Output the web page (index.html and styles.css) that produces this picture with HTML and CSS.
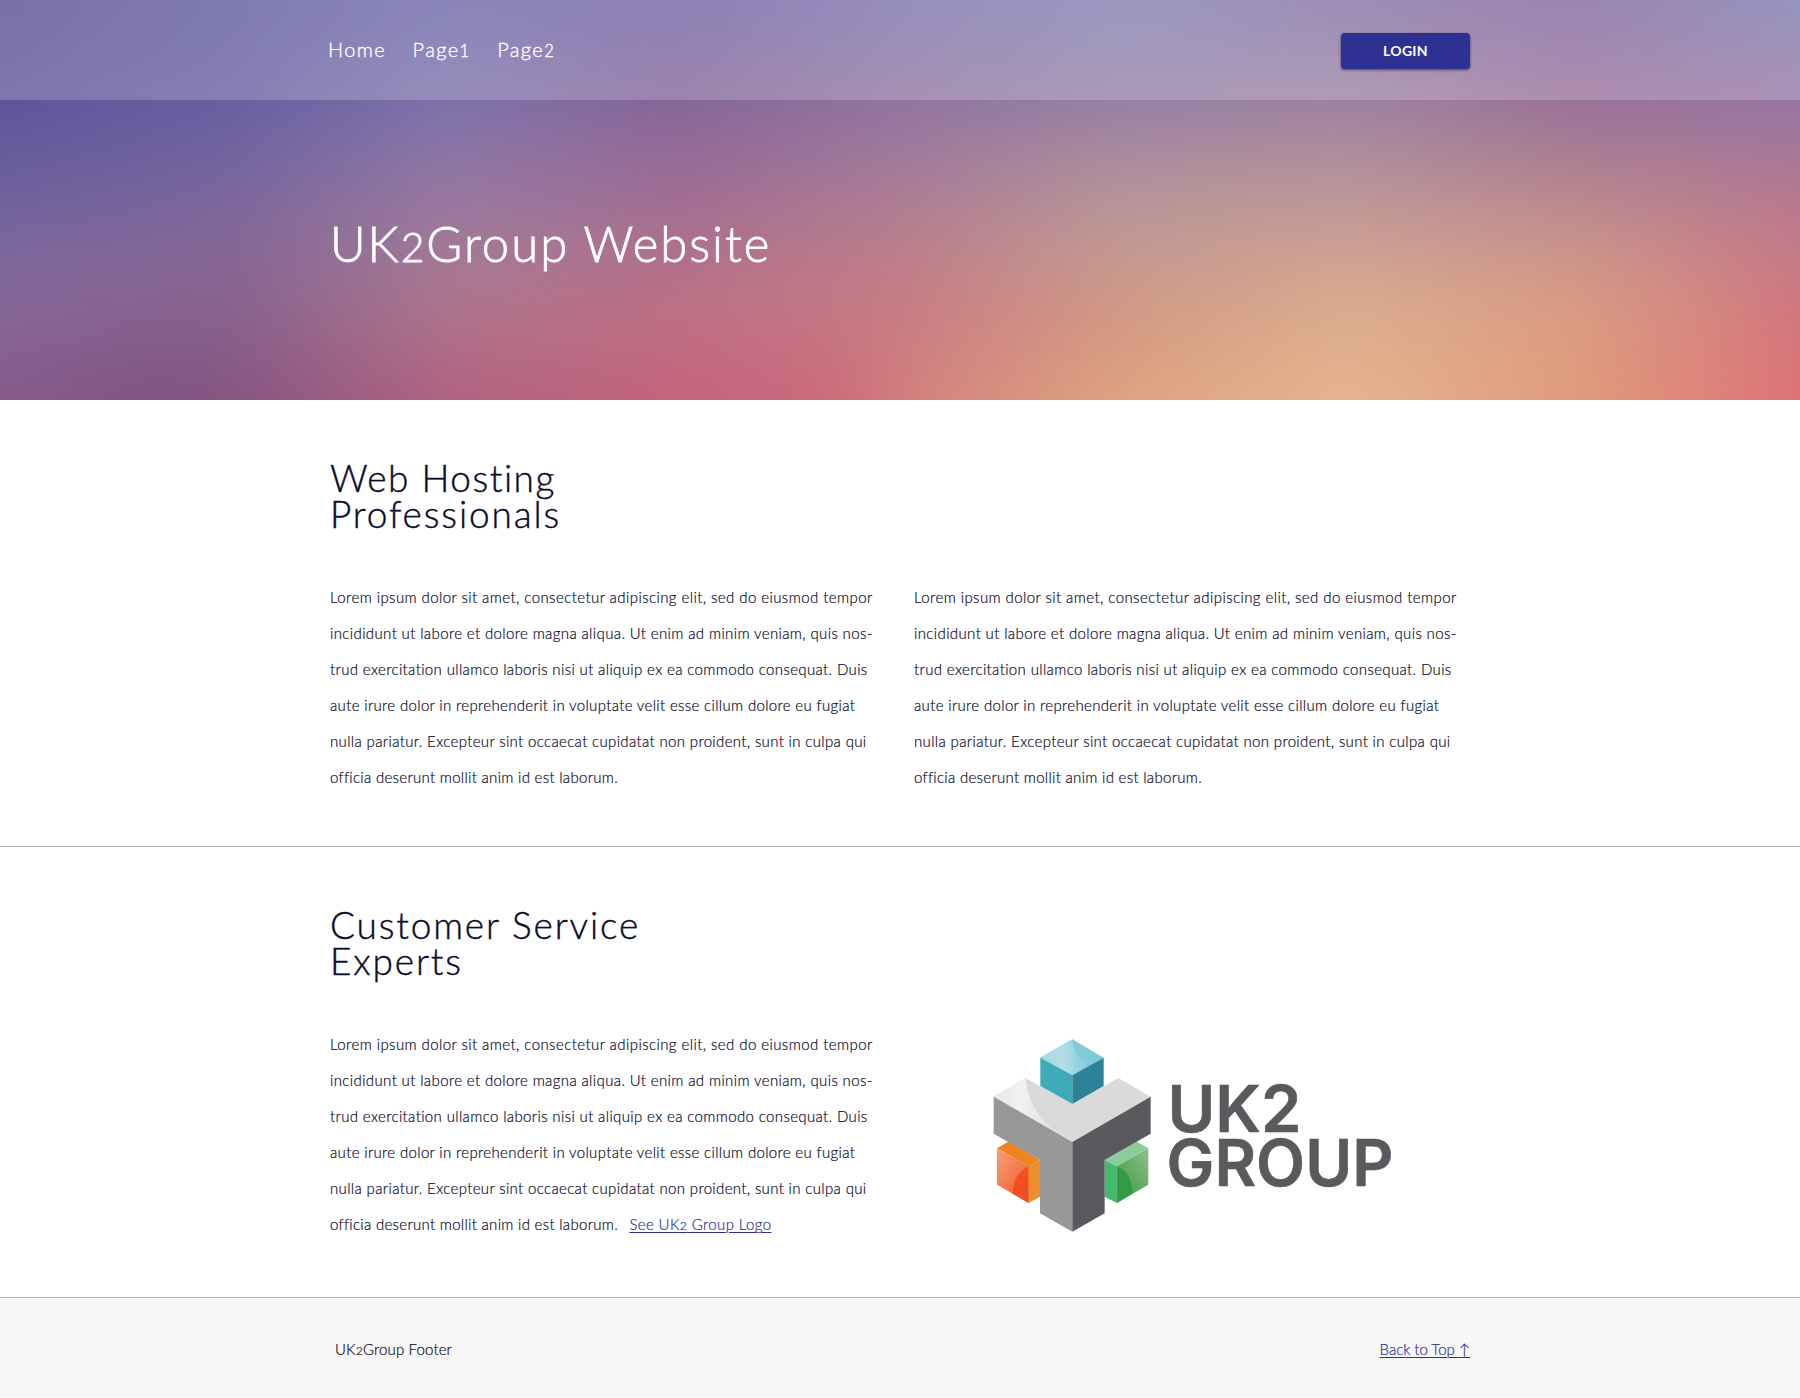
FILE: index.html
```
<!DOCTYPE html>
<html lang="en">
<head>
<meta charset="utf-8">
<title>UK2Group Website</title>
<link rel="stylesheet" href="styles.css">
</head>
<body>
<div class="hero" id="top">
  <div class="backdrop">
    <div class="band band-1"></div>
    <div class="band band-2"></div>
    <div class="band band-3"></div>
    <div class="band band-4"></div>
    <div class="band band-5"></div>
    <div class="band band-6"></div>
  </div>
  <header class="site-header">
    <div class="container header-row">
      <nav class="nav">
        <a href="#">Home</a>
        <a href="#">Page<span class="num">1</span></a>
        <a href="#">Page<span class="num">2</span></a>
      </nav>
      <button class="login" type="button">LOGIN</button>
    </div>
  </header>
  <div class="container">
    <h1 class="title">UK<span class="num">2</span>Group Website</h1>
  </div>
</div>

<section class="section section-ruled">
  <div class="container">
    <h2 class="heading"><span class="tight">Web Hosting</span><br>Professionals</h2>
    <div class="columns">
      <p class="copy">
        <span class="line l1">Lorem ipsum dolor sit amet, consectetur adipiscing elit, sed do eiusmod tempor</span>
        <span class="line l2">incididunt ut labore et dolore magna aliqua. Ut enim ad minim veniam, quis nos-</span>
        <span class="line l3">trud exercitation ullamco laboris nisi ut aliquip ex ea commodo consequat. Duis</span>
        <span class="line l4">aute irure dolor in reprehenderit in voluptate velit esse cillum dolore eu fugiat</span>
        <span class="line l5">nulla pariatur. Excepteur sint occaecat cupidatat non proident, sunt in culpa qui</span>
        <span class="line l6">officia deserunt mollit anim id est laborum.</span>
      </p>
      <p class="copy">
        <span class="line l1">Lorem ipsum dolor sit amet, consectetur adipiscing elit, sed do eiusmod tempor</span>
        <span class="line l2">incididunt ut labore et dolore magna aliqua. Ut enim ad minim veniam, quis nos-</span>
        <span class="line l3">trud exercitation ullamco laboris nisi ut aliquip ex ea commodo consequat. Duis</span>
        <span class="line l4">aute irure dolor in reprehenderit in voluptate velit esse cillum dolore eu fugiat</span>
        <span class="line l5">nulla pariatur. Excepteur sint occaecat cupidatat non proident, sunt in culpa qui</span>
        <span class="line l6">officia deserunt mollit anim id est laborum.</span>
      </p>
    </div>
  </div>
</section>

<section class="section section-last">
  <div class="container">
    <h2 class="heading">Customer Service<br>Experts</h2>
    <div class="columns">
      <p class="copy">
        <span class="line l1">Lorem ipsum dolor sit amet, consectetur adipiscing elit, sed do eiusmod tempor</span>
        <span class="line l2">incididunt ut labore et dolore magna aliqua. Ut enim ad minim veniam, quis nos-</span>
        <span class="line l3">trud exercitation ullamco laboris nisi ut aliquip ex ea commodo consequat. Duis</span>
        <span class="line l4">aute irure dolor in reprehenderit in voluptate velit esse cillum dolore eu fugiat</span>
        <span class="line l5">nulla pariatur. Excepteur sint occaecat cupidatat non proident, sunt in culpa qui</span>
        <span class="line l6">officia deserunt mollit anim id est laborum.<a class="link logo-link" href="#logo">See UK<span class="num">2</span> Group Logo</a></span>
      </p>
      <svg class="logo" id="logo" viewBox="0 0 556 216" role="img" aria-label="UK2 Group">
        <defs>
          <linearGradient id="teal" x1="0" y1="0" x2="1" y2="0"><stop offset="0" stop-color="#a3d6e2"/><stop offset=".45" stop-color="#b5dee8"/><stop offset="1" stop-color="#7fcbd8"/></linearGradient>
          <linearGradient id="shine" x1="0" y1="0" x2="1" y2="0"><stop offset="0" stop-color="#e6e6e6"/><stop offset=".35" stop-color="#f1f1f1"/><stop offset="1" stop-color="#dadada"/></linearGradient>
          <linearGradient id="orange" x1="0" y1="0" x2=".8" y2="1"><stop offset="0" stop-color="#f8a07a"/><stop offset="1" stop-color="#f15a2a"/></linearGradient>
          <linearGradient id="green" x1="1" y1="0" x2=".2" y2="1"><stop offset="0" stop-color="#8fbf8b"/><stop offset="1" stop-color="#3f9a40"/></linearGradient>
        </defs>
        <g transform="translate(71 4) scale(.33333)">
          <path fill="#ee8322" d="M36 355 70 335 165 390 131 409z"/>
          <path fill="url(#orange)" d="M36 355 131 409V519L36 464z"/>
          <path fill="#f04e23" d="M131 409V519L83 491C85 450 98 425 131 409z"/>
          <path fill="#ec8d2c" d="M131 409 165 390V500L131 519z"/>
          <path fill="#88cd9b" d="M490 355 455 335 359 390 395 409z"/>
          <path fill="url(#green)" d="M395 409 490 355V464L395 519z"/>
          <path fill="#319a45" d="M395 409C427 422 440 445 442 491L395 519z"/>
          <path fill="#43b96b" d="M359 390 395 409V519L359 500z"/>
          <path fill="#dadada" d="M26 200 122 144 262 223 400 144 497 200 262 336z"/>
          <path fill="url(#shine)" d="M26 200 122 144C128 230 180 290 250 329z"/>
          <path fill="#989898" d="M26 200 262 336V605L165 550V390L26 311z"/>
          <path fill="#5a595e" d="M262 336 497 200V311L359 390V550L262 605z"/>
          <path fill="#7fcbd8" d="M166 83 262 28 356 83 262 136z"/>
          <path fill="url(#teal)" d="M166 83 262 28C264 60 276 84 311 108L262 136z"/>
          <path fill="#3dabb7" d="M166 83 262 136V222L166 168z"/>
          <path fill="#2d8199" d="M262 136 356 83V168L262 222z"/>
        </g>
        <text class="logo-text" x="253.5" y="106" textLength="134" lengthAdjust="spacingAndGlyphs">UK2</text>
        <text class="logo-text" x="252.5" y="159.7" textLength="227" lengthAdjust="spacingAndGlyphs">GROUP</text>
      </svg>
    </div>
  </div>
</section>

<footer class="footer">
  <div class="container footer-row">
    <span class="footer-name">UK<span class="num">2</span>Group Footer</span>
    <a class="link top-link" href="#top">Back to Top ↑</a>
  </div>
</footer>
</body>
</html>
```
FILE: styles.css
```
* {
  box-sizing: border-box;
}

body {
  margin: 0;
  background: #fff;
  color: #0b0b2b;
  font-family: Lato, "Open Sans", sans-serif;
  font-weight: 300;
}

.container {
  width: 1140px;
  margin: 0 auto;
}

/* lowercase-height figures */
.num {
  font-size: 0.83em;
  line-height: 0;
}

/* Hero */
.hero {
  position: relative;
  height: 400px;
  overflow: hidden;
}

/* Oversized by 80px on each side so the softened edges stay out of view */
.backdrop {
  position: absolute;
  inset: -80px;
  filter: blur(26px);
}

.band {
  position: absolute;
  inset: 0;
}

/* Each band fades in below the previous one, giving a two-way gradient */
.band-1 {
  background: linear-gradient(90deg, #594c92 80px, #6059a1 305px, #6d67a9 530px, #7160a4 755px, #7b72ae 980px, #817eb3 1205px, #8370a6 1430px, #81659f 1655px, #797aaf 1880px);
}

.band-2 {
  background: linear-gradient(90deg, #5f5499 80px, #675fa1 305px, #7d72ab 530px, #856599 755px, #90759f 980px, #9580a4 1205px, #9d82a3 1430px, #987199 1655px, #9776a4 1880px);
  mask-image: linear-gradient(transparent 80px, #000 180px);
}

.band-3 {
  background: linear-gradient(90deg, #6a5e9e 80px, #75659f 305px, #9178a5 530px, #9a6b95 755px, #a57b9a 980px, #b08f9c 1205px, #b4919a 1430px, #b08191 1655px, #ad7894 1880px);
  mask-image: linear-gradient(transparent 180px, #000 250px);
}

.band-4 {
  background: linear-gradient(90deg, #7a679c 80px, #836797 305px, #a27a9a 530px, #ab718e 755px, #b97f8c 980px, #c19a94 1205px, #cb9f92 1430px, #c8928b 1655px, #c27a8a 1880px);
  mask-image: linear-gradient(transparent 250px, #000 320px);
}

.band-5 {
  background: linear-gradient(90deg, #866699 80px, #88628d 305px, #af768c 530px, #be7085 755px, #c87c84 980px, #d29884 1205px, #dcac90 1430px, #da9c83 1655px, #d2777e 1880px);
  mask-image: linear-gradient(transparent 320px, #000 390px);
}

.band-6 {
  background: linear-gradient(90deg, #875a8a 80px, #80507f 240px, #87547f 314px, #b16080 530px, #c5627a 755px, #cc687a 908px, #d5837c 998px, #e0a580 1205px, #e7b68e 1430px, #e19b7b 1655px, #df7176 1880px);
  mask-image: linear-gradient(transparent 390px, #000 490px);
}

.site-header {
  position: relative;
  height: 100px;
  background: rgba(255, 255, 255, 0.2);
}

.header-row {
  display: flex;
  align-items: center;
  justify-content: space-between;
  height: 100px;
}

.nav {
  display: flex;
  gap: 26.5px;
  padding: 0 0 3px;
  margin-left: -2px;
}

.nav a {
  color: #fff;
  font-size: 20px;
  letter-spacing: 1.4px;
  line-height: 24px;
  text-decoration: none;
  -webkit-text-stroke: 0.35px #fff;
}

.login {
  width: 129px;
  height: 36px;
  margin-top: 2px;
  padding: 0;
  border: 0;
  border-radius: 4px;
  background: #2e3192;
  box-shadow: 0 1px 3px rgba(0, 0, 0, 0.55);
  color: #fff;
  font: 700 14px/36px Lato, "Open Sans", sans-serif;
  letter-spacing: 0.3px;
}

.title {
  position: relative;
  margin: 119px 0 0;
  color: #fff;
  font-size: 49px;
  font-weight: 300;
  letter-spacing: 2px;
  line-height: 48px;
  -webkit-text-stroke: 0.8px #fff;
}

/* Content sections */
.section {
  padding-top: 60px;
}

.section-ruled {
  padding-bottom: 51px;
  border-bottom: 1px solid #b3b3b3;
}

.section-last {
  padding-bottom: 55px;
}

.heading {
  margin: 0 0 47px;
  font-size: 37px;
  font-weight: 300;
  letter-spacing: 1.85px;
  line-height: 36px;
  -webkit-text-stroke: 0.4px #0b0b2b;
}

.tight {
  letter-spacing: 1.5px;
}

.columns {
  display: grid;
  grid-template-columns: 556px 556px;
  column-gap: 28px;
}

.copy {
  margin: 0;
  font-size: 15px;
  line-height: 36px;
  -webkit-text-stroke: 0.2px;
}

.line {
  display: block;
  white-space: nowrap;
}

.l1 { letter-spacing: 0.425px; }
.l2 { letter-spacing: 0.375px; }
.l3 { letter-spacing: 0.365px; }
.l4 { letter-spacing: 0.34px; }
.l5 { letter-spacing: 0.35px; }
.l6 { letter-spacing: 0.3px; }

.link {
  color: #2e3192;
  text-decoration: underline;
  text-decoration-thickness: 1px;
  text-underline-offset: 2px;
}

.logo-link {
  margin-left: 11.5px;
  letter-spacing: 0.37px;
}

.logo {
  display: block;
  width: 556px;
  height: 216px;
}

.logo-text {
  fill: #5a595e;
  stroke: #5a595e;
  stroke-width: 0.6px;
  font: 600 65px Inter, "Liberation Sans", sans-serif;
}

/* Footer */
.footer {
  height: 100px;
  border-top: 1px solid #b3b3b3;
  background: #f7f7f7;
}

.footer-row {
  display: flex;
  justify-content: space-between;
  padding: 33px 0 0 5px;
  font-size: 15px;
  line-height: 36px;
  -webkit-text-stroke: 0.2px;
}

.footer-name {
  letter-spacing: 0.13px;
}

.top-link {
  letter-spacing: -0.03px;
}
```
